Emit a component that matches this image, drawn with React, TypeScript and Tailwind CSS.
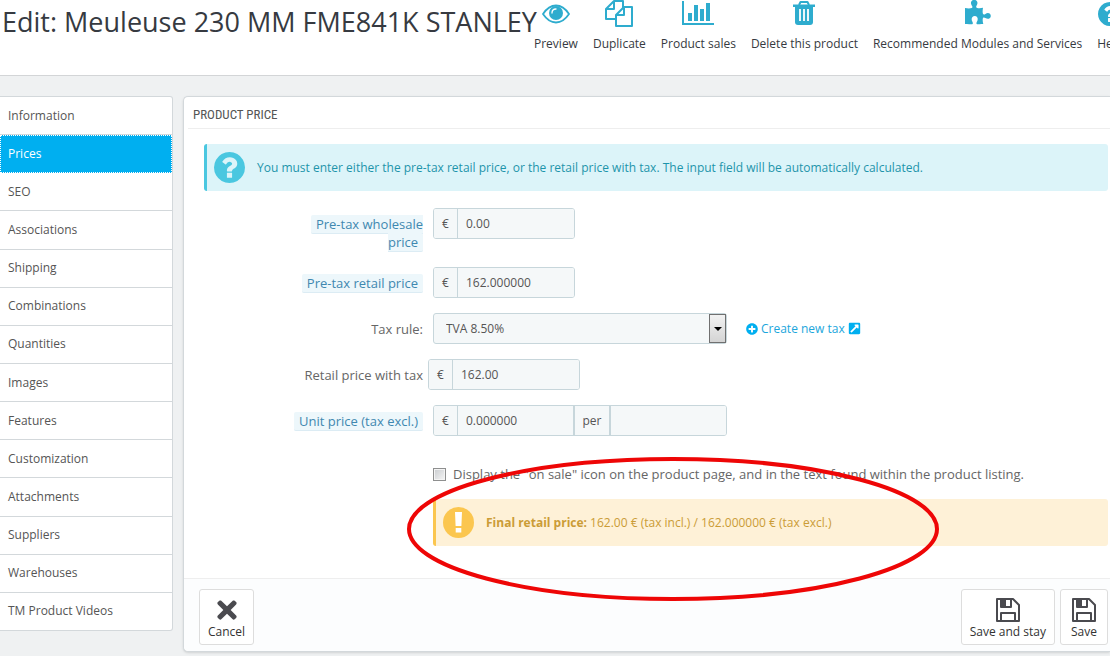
import { useState } from "react";
import type { ReactNode } from "react";
import { FaExternalLinkSquareAlt, FaPlusCircle, FaTimes } from "react-icons/fa";

const tabs = [
  "Information",
  "Prices",
  "SEO",
  "Associations",
  "Shipping",
  "Combinations",
  "Quantities",
  "Images",
  "Features",
  "Customization",
  "Attachments",
  "Suppliers",
  "Warehouses",
  "TM Product Videos",
];

function EyeIcon() {
  return (
    <svg viewBox="0 0 28 28" className="size-7" fill="none">
      <path d="M1 14C5 8 9.500 5.500 14 5.500S23 8 27 14c-4 6-8.500 8.500-13 8.500S5 20 1 14z" stroke="currentColor" strokeWidth="1.800" />
      <circle cx="14" cy="13" r="7" fill="currentColor" />
      <path d="M10 13c0-2.500 1.500-4 4-4" stroke="#fff" strokeWidth="1.300" strokeLinecap="round" />
    </svg>
  );
}

function DuplicateIcon() {
  return (
    <svg viewBox="0 0 28 28" className="size-7" fill="none" stroke="currentColor" strokeWidth="2" strokeLinejoin="round">
      <path d="M11 19H1V9l8-8h9v7" />
      <path d="M9 1v8H1" />
      <path d="M11 15l8-8h8v19H11z" />
      <path d="M19 7v8h-8" />
    </svg>
  );
}

function ChartIcon() {
  return (
    <svg viewBox="0 0 32 28" className="h-7 w-8" fill="currentColor">
      <path d="M0 1h2v22h30v2H0z" />
      <path d="M6 13h4v8H6zM12 5h4v16h-4zM18 9h4v12h-4zM24 3h4v18h-4z" />
    </svg>
  );
}

function TrashIcon() {
  return (
    <svg viewBox="0 0 28 28" className="size-7" fill="none" stroke="currentColor">
      <path d="M9 5l1.500-3h7L19 5" strokeWidth="2" strokeLinejoin="round" />
      <path d="M3 4.500h22V7H3z" fill="currentColor" stroke="none" />
      <path d="M5 7h18v15a3 3 0 0 1-3 3H8a3 3 0 0 1-3-3z" fill="currentColor" stroke="none" />
      <path d="M10 9v12M14 9v12M18 9v12" stroke="#fff" strokeWidth="1.800" />
    </svg>
  );
}

function PuzzleIcon() {
  return (
    <svg viewBox="0 0 28 28" className="size-7" fill="currentColor">
      <path d="M1 8c2.500.5 5 .6 6.800 0 1.200-.5.600-1.700-.2-2.800C6 2.500 7.500-.2 10.200-.2s4.200 2.700 2.600 5.400c-.8 1.100-1 2.400.3 2.700 1.900.4 3.900.3 5.900-.2-.4 2.200-.5 4-.2 5.600.3 1.500 1.500 1.400 2.600.6 2.500-1.700 5.400-.6 5.400 2s-2.900 3.800-5.400 2.100c-1.200-.9-2.400-.8-2.600.6-.3 1.900 0 3.700.5 5.400-2.200-.3-3.900 0-5.300.3-1.600.3-2-1.100-1.100-2.500 1.500-2.300 1-5.800-2.100-5.800s-3.900 3.300-2.400 5.800c.9 1.600.4 2.800-1.200 2.500C5.300 24 3.300 23.700 1 24z" />
    </svg>
  );
}

function QuestionIcon({ className }: { className: string }) {
  return (
    <svg viewBox="128 128 1536 1536" className={className} fill="currentColor">
      <path d="M1024 1376v-192q0-14-9-23t-23-9h-192q-14 0-23 9t-9 23v192q0 14 9 23t23 9h192q14 0 23-9t9-23zm256-672q0-88-55.500-163t-138.500-116-170-41q-243 0-371 213-15 24 8 42l132 100q7 6 19 6 16 0 25-12 53-68 86-92 34-24 86-24 48 0 85.500 26t37.500 59q0 38-20 61t-68 45q-63 28-115.500 86.500t-52.500 125.500v36q0 14 9 23t23 9h192q14 0 23-9t9-23q0-19 21.500-49.500t54.500-49.500q32-18 49-28.500t46-35 44.500-48 28-60.500 12.500-81zm384 192q0 209-103 385.500t-279.500 279.500-385.500 103-385.500-103-279.500-279.500-103-385.500 103-385.500 279.500-279.500 385.500-103 385.500 103 279.500 279.500 103 385.500z" />
    </svg>
  );
}

function ExclamationIcon({ className }: { className: string }) {
  return (
    <svg viewBox="0 0 31 31" className={className} fill="none">
      <circle cx="15.500" cy="15.500" r="15.500" fill="currentColor" />
      <path d="M12 5h7l-.6 14h-5.800zM12.700 21h5.600v4.500h-5.600z" fill="#fff" />
    </svg>
  );
}

function SaveIcon() {
  return (
    <svg viewBox="0 0 24 24" className="size-6" fill="none" stroke="currentColor" strokeWidth="2" strokeLinejoin="round">
      <path d="M1 1h16l6 6v16H1z" />
      <path d="M5 23v-8h14v8" />
      <path d="M5 1v8h10V1" />
      <path d="M5 1h5v8H5z" fill="currentColor" stroke="none" />
    </svg>
  );
}

const actions = [
  { label: "Preview", icon: <EyeIcon /> },
  { label: "Duplicate", icon: <DuplicateIcon /> },
  { label: "Product sales", icon: <ChartIcon /> },
  { label: "Delete this product", icon: <TrashIcon /> },
  { label: "Recommended Modules and Services", icon: <PuzzleIcon /> },
  { label: "Help", icon: <QuestionIcon className="size-6" /> },
];

const addon = "flex items-center justify-center border-[#c7d6db] bg-[#f5f8f9]";
const field = "h-full min-w-0 flex-1 bg-[#f5f8f9] px-2 text-[#555] outline-none";

function FormRow({ id, label, hint, children }: { id: string; label: string; hint?: boolean; children: ReactNode }) {
  return (
    <div className="grid grid-cols-[219px_1fr] gap-x-2.5">
      <div className="pt-[7px] pl-20 text-right text-[13px] leading-[18px] text-[#666]">
        <label
          htmlFor={id}
          className={hint ? "rounded-xs border-b border-[#dcecf4] bg-[#edf7fb] px-[5px] text-[#3f88b0]" : ""}
        >
          {label}
        </label>
      </div>
      <div className="flex items-start">{children}</div>
    </div>
  );
}

function PriceInput({ id, value, className }: { id: string; value: string; className: string }) {
  return (
    <div className={`flex h-[31px] overflow-hidden rounded-[3px] border border-[#c7d6db] ${className}`}>
      <span className={`${addon} w-6 border-r`}>€</span>
      <input id={id} type="text" defaultValue={value} className={field} />
    </div>
  );
}

function FooterButton({ label, icon }: { label: string; icon: ReactNode }) {
  return (
    <button
      type="button"
      className="flex h-14 min-w-12 flex-col items-center rounded-[3px] border border-[#ddd] bg-white px-2 pt-1.5 text-[#333]"
    >
      <span className="flex h-7 items-center text-[#4a4a4f]">{icon}</span>
      <span className="leading-4">{label}</span>
    </button>
  );
}

export default function App() {
  const [activeTab, setActiveTab] = useState("Prices");

  return (
    <div className="min-h-screen overflow-hidden bg-[#eff1f2] font-['Open_Sans','Noto_Sans',sans-serif] text-xs text-[#555]">
      {/* Page header */}
      <header className="flex h-19 overflow-hidden border-b border-[#d3d5d7] bg-white">
        <h1 className="w-[534px] shrink-0 pt-1 pl-[2px] text-[27px] leading-9 whitespace-nowrap text-[#363a41]">
          Edit: Meuleuse 230 MM FME841K STANLEY
        </h1>
        <div className="flex shrink-0 items-start gap-[15px]">
          {actions.map((action) => (
            <a key={action.label} href="#" className="flex flex-col items-center whitespace-nowrap text-[#363a41]">
              <span className="flex h-7 items-center text-[#2eacce]">{action.icon}</span>
              <span className="mt-2 leading-4">{action.label}</span>
            </a>
          ))}
        </div>
      </header>

      <div className="flex items-start gap-2.5 pt-5">
        {/* Product tabs */}
        <nav className="grid min-h-[535px] w-[173px] shrink-0 overflow-hidden rounded-r-[3px] border border-l-0 border-[#d3d8db] bg-white">
          {tabs.map((tab) => (
            <a
              key={tab}
              href="#"
              onClick={() => setActiveTab(tab)}
              className={`flex items-center border-b pl-2 last:border-b-0 ${
                tab === activeTab
                  ? "border-[#00aff0] bg-[#00aff0] text-white outline-1 -outline-offset-1 outline-dotted outline-white"
                  : "border-[#d3d8db] text-[#555]"
              }`}
            >
              {tab}
            </a>
          ))}
        </nav>

        {/* Prices panel */}
        <main className="relative min-w-0 flex-1 rounded-l-[5px] border border-r-0 border-[#d3d8db] bg-white shadow-sm">
          <h2 className="ml-1 border-b border-[#eee] pt-1 pl-[5px] font-['Roboto_Condensed','Liberation_Sans_Narrow',sans-serif] text-[13px] leading-[27px] text-[#555] uppercase">
            Product price
          </h2>

          <form className="mt-[15px] mr-0.5 ml-5">
            <div className="flex h-[47px] items-center rounded-[3px] border-l-[3px] border-[#4ac7e0] bg-[#dcf4f9] pl-[7px] text-[#1e94ab]">
              <QuestionIcon className="mr-3 size-[31px] text-[#4ac7e0]" />
              You must enter either the pre-tax retail price, or the retail price with tax. The input field will be
              automatically calculated.
            </div>

            <div className="mt-[17px] flex flex-col gap-[15px]">
              <FormRow id="wholesale" label="Pre-tax wholesale price" hint>
                <PriceInput id="wholesale" value="0.00" className="mb-[13px] w-[142px]" />
              </FormRow>

              <FormRow id="retail" label="Pre-tax retail price" hint>
                <PriceInput id="retail" value="162.000000" className="w-[142px]" />
              </FormRow>

              <FormRow id="tax-rule" label="Tax rule:">
                <div className="relative h-[31px] w-[294px]">
                  <select
                    id="tax-rule"
                    className="size-full appearance-none rounded-[3px] border border-[#c7d6db] bg-[#f5f8f9] pl-3 text-[#555] outline-none"
                  >
                    <option>TVA 8.50%</option>
                  </select>
                  <span className="pointer-events-none absolute inset-y-px right-px flex w-[17px] items-center justify-center border border-[#707070] bg-linear-to-b from-[#f2f2f2] to-[#d4d4d4]">
                    <svg viewBox="0 0 8 4" className="h-1 w-2">
                      <path d="M0 0h8L4 4z" />
                    </svg>
                  </span>
                </div>
                <a href="#" className="ml-[19px] flex h-[31px] items-center text-[#1ba6dc]">
                  <FaPlusCircle className="mr-[3px] size-3 text-[#00aff0]" />
                  Create new tax
                  <FaExternalLinkSquareAlt className="ml-[3px] size-[13px] text-[#00aff0]" />
                </a>
              </FormRow>

              <FormRow id="retail-tax" label="Retail price with tax">
                <PriceInput id="retail-tax" value="162.00" className="-ml-[5px] w-[152px]" />
              </FormRow>

              <FormRow id="unit-price" label="Unit price (tax excl.)" hint>
                <div className="flex h-[31px] w-[294px] overflow-hidden rounded-[3px] border border-[#c7d6db]">
                  <span className={`${addon} w-6 border-r`}>€</span>
                  <input id="unit-price" type="text" defaultValue="0.000000" className={field} />
                  <span className={`${addon} w-[38px] border-x-2`}>per</span>
                  <input type="text" aria-label="Unit" className={field} />
                </div>
              </FormRow>
            </div>

            <div className="mt-[29px] ml-[229px]">
              <label className="flex items-center text-[13px] leading-[19px] text-[#666]">
                <input
                  type="checkbox"
                  className="mr-[7px] size-[13px] appearance-none border border-[#8e8f8f] bg-linear-to-br from-[#c9cccf] to-[#f6f6f6] shadow-[inset_0_0_0_1px_#f4f4f4] checked:from-[#00aff0]"
                />
                Display the "on sale" icon on the product page, and in the text found within the product listing.
              </label>
              <div className="mt-[15px] flex h-[47px] items-center rounded-[3px] border-l-[3px] border-[#fbc64f] bg-[#fef1d7] pl-[7px] text-[#cb9c36]">
                <ExclamationIcon className="mr-3 size-[31px] text-[#fbc64f]" />
                <span>
                  <strong className="font-bold">Final retail price:</strong> 162.00 € (tax incl.) / 162.000000 € (tax
                  excl.)
                </span>
              </div>
            </div>
          </form>

          <footer className="mt-8 flex justify-between rounded-bl-[5px] border-t border-[#eee] bg-[#fcfdfe] pt-2.5 pr-0.5 pb-1.5 pl-[15px]">
            <FooterButton label="Cancel" icon={<FaTimes className="size-7" />} />
            <div className="flex gap-[5px]">
              <FooterButton label="Save and stay" icon={<SaveIcon />} />
              <FooterButton label="Save" icon={<SaveIcon />} />
            </div>
          </footer>

          {/* Highlight around the final price */}
          <svg
            viewBox="0 0 532 144"
            className="pointer-events-none absolute top-[360px] left-[223px] h-[144px] w-[532px]"
            fill="none"
          >
            <ellipse cx="266" cy="72" rx="264" ry="70" stroke="#ee0606" strokeWidth="4" />
          </svg>
        </main>
      </div>
    </div>
  );
}
